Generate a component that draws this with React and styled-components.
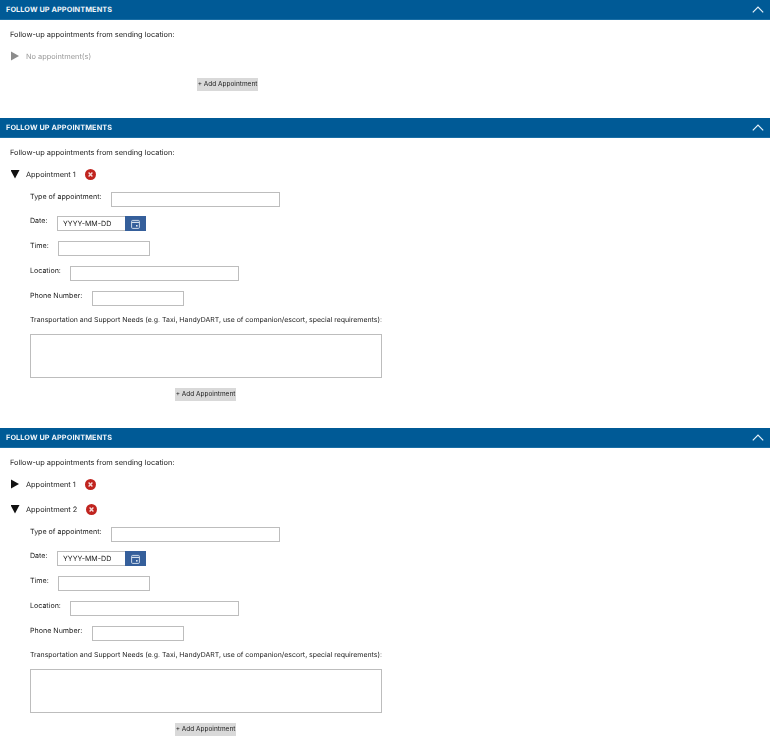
import React from "react";
import styled, { createGlobalStyle } from "styled-components";

const Global = createGlobalStyle`
  html, body { margin: 0; padding: 0; background: #fff; }
  body { font-family: Inter, "Liberation Sans", sans-serif; color: #222; text-rendering: geometricPrecision; }
`;
const Page = styled.div`display: flex; flex-direction: column; width: 770px; will-change: opacity;`;
const Section = styled.section`display: flex; flex-direction: column;`;
const Header = styled.header`
  height: 20px; background: #005a96; border-bottom: 1px solid #1a6ea5; box-sizing: border-box;
  display: flex; align-items: center; justify-content: space-between; padding: 0 6px 0 6px;
`;
const Title = styled.h2`margin: 0; font-size: 7.3px; line-height: 10px; padding-top: 1px; font-weight: 700; color: #f2f7fb; letter-spacing: 0.1px;`;
const Body = styled.div`display: flex; flex-direction: column; padding: 10px 0 0 10px; height: ${p => p.$h}px; box-sizing: border-box;`;
const Intro = styled.p`margin: 0; font-size: 7.4px; line-height: 10px; color: #222;`;
const Row = styled.div`display: flex; align-items: center; height: 14px; margin-top: ${p => p.$mt}px;`;
const Arrow = styled.svg`width: 9px; height: 10px; margin-left: 1px; flex: none;`;
const RowLabel = styled.span`margin: 0 9px 0 6px; font-size: 7.4px; color: ${p => p.$muted ? "#9a9a9a" : "#222"}; white-space: nowrap;`;
const Form = styled.div`display: flex; flex-direction: column; padding-left: 20px;`;
const Field = styled.div`display: flex; align-items: flex-start; margin-top: ${p => p.$mt}px;`;
const Label = styled.label`font-size: 7.1px; line-height: 9px; color: #222; width: ${p => p.$w}px; flex: none; white-space: nowrap;`;
const Input = styled.div`
  box-sizing: border-box; width: ${p => p.$w}px; height: 15px; background: #fff; border: 1px solid #bdbdbd;
`;
const DateBox = styled.div`display: flex; height: 15px;`;
const DateText = styled.div`
  box-sizing: border-box; width: 68px; height: 15px; border: 1px solid #bdbdbd; border-right: 0;
  font-size: 7.1px; line-height: 14px; padding-left: 5px; color: #222;
`;
const CalBtn = styled.div`width: 21px; height: 15px; background: #355f9b; display: flex; align-items: center; justify-content: center;`;
const NeedsLabel = styled.div`font-size: 6.95px; line-height: 10px; color: #222; margin-top: 9px; white-space: nowrap;`;
const Area = styled.div`box-sizing: border-box; width: 352px; height: 44px; border: 1px solid #bdbdbd; margin-top: 9px;`;
const AddWrap = styled.div`display: flex; justify-content: center; width: ${p => p.$w}px; margin-top: ${p => p.$mt}px;`;
const AddBtn = styled.button`
  border: 0; padding: 0; width: 61px; height: 13px; background: #d9d9d9; font-family: inherit;
  font-size: 6.5px; line-height: 13px; color: #222; text-align: center; white-space: nowrap;
`;

const Chevron = () => (
  <svg width="12" height="7" viewBox="0 0 12 7" fill="none"><path d="M0.8 6.4 6 1 11.2 6.4" stroke="#e8f3fa" strokeWidth="1.2" /></svg>
);
const Right = ({ color = "#111" }) => (
  <Arrow viewBox="0 0 9 10"><path d="M0 0.5 8 5 0 9.5Z" fill={color} /></Arrow>
);
const Down = () => (
  <Arrow viewBox="0 0 9 10"><path d="M-0.5 1H8.5L4 9.5Z" fill="#111" /></Arrow>
);
const Remove = () => (
  <svg width="11" height="11" viewBox="0 0 11 11">
    <circle cx="5.5" cy="5.5" r="5.5" fill="#c0241f" />
    <path d="M3.6 3.6 7.4 7.4M7.4 3.6 3.6 7.4" stroke="#f6dcdc" strokeWidth="1.4" />
  </svg>
);
const Cal = () => (
  <svg width="9" height="10" viewBox="0 0 9 10" fill="none">
    <rect x="0.6" y="1.4" width="7.8" height="8" rx="1" stroke="#dfe7f2" strokeWidth="0.9" />
    <path d="M0.8 3.4H8.2" stroke="#dfe7f2" strokeWidth="1.1" />
    <rect x="5" y="6" width="1.6" height="1.6" fill="#dfe7f2" />
  </svg>
);

const AppointmentForm = () => (
  <Form>
    <Field $mt={11}>
      <Label $w={81}>Type of appointment:</Label>
      <Input $w={169} />
    </Field>
    <Field $mt={9}>
      <Label $w={27}>Date:</Label>
      <DateBox>
        <DateText>YYYY-MM-DD</DateText>
        <CalBtn><Cal /></CalBtn>
      </DateBox>
    </Field>
    <Field $mt={10}>
      <Label $w={28}>Time:</Label>
      <Input $w={92} />
    </Field>
    <Field $mt={10}>
      <Label $w={40}>Location:</Label>
      <Input $w={169} />
    </Field>
    <Field $mt={10}>
      <Label $w={62}>Phone Number:</Label>
      <Input $w={92} />
    </Field>
    <NeedsLabel>Transportation and Support Needs (e.g. Taxi, HandyDART, use of companion/escort, special requirements):</NeedsLabel>
    <Area />
    <AddWrap $w={351} $mt={10}><AddBtn>+ Add Appointment</AddBtn></AddWrap>
  </Form>
);

const Appointment = ({ n, open, mt }) => (
  <Row $mt={mt}>
    {open ? <Down /> : <Right />}
    <RowLabel>Appointment {n}</RowLabel>
    <Remove />
  </Row>
);

export default function App() {
  return (
    <Page>
      <Global />
      <Section>
        <Header><Title>FOLLOW UP APPOINTMENTS</Title><Chevron /></Header>
        <Body $h={98}>
          <Intro>Follow-up appointments from sending location:</Intro>
          <Row $mt={9}><Right color="#8c8c8c" /><RowLabel $muted>No appointment(s)</RowLabel></Row>
          <AddWrap $w={435} $mt={15}><AddBtn>+ Add Appointment</AddBtn></AddWrap>
        </Body>
      </Section>
      <Section>
        <Header><Title>FOLLOW UP APPOINTMENTS</Title><Chevron /></Header>
        <Body $h={290}>
          <Intro>Follow-up appointments from sending location:</Intro>
          <Appointment n={1} open mt={9} />
          <AppointmentForm />
        </Body>
      </Section>
      <Section>
        <Header><Title>FOLLOW UP APPOINTMENTS</Title><Chevron /></Header>
        <Body $h={300}>
          <Intro>Follow-up appointments from sending location:</Intro>
          <Appointment n={1} mt={9} />
          <Appointment n={2} open mt={11} />
          <AppointmentForm />
        </Body>
      </Section>
    </Page>
  );
}
